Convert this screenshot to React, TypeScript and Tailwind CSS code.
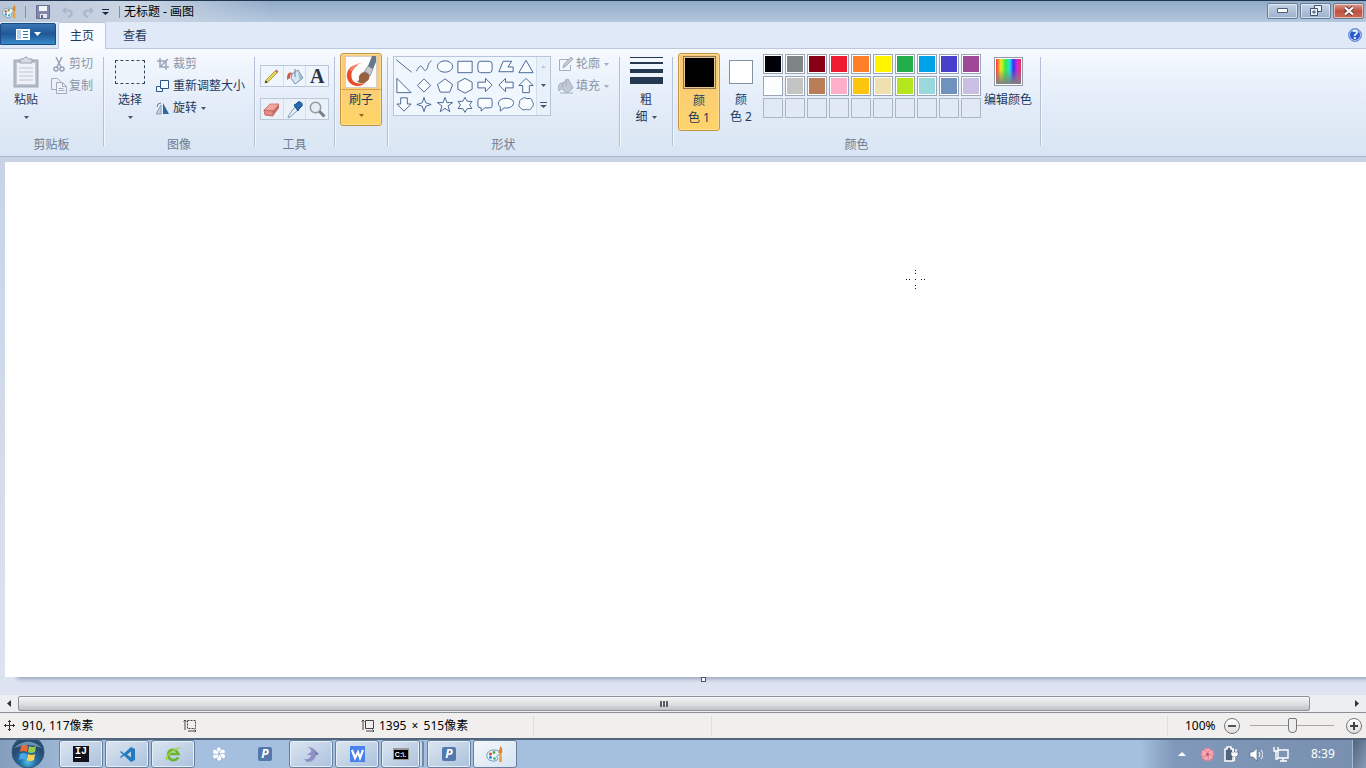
import type { ReactNode } from 'react';

const palette = [
  ['#000008', '#7f8586', '#880015', '#ed1c30', '#ff7f27', '#fff500', '#22ac4c', '#00a2e8', '#4640cc', '#a04898'],
  ['#fbfdff', '#c3c5c5', '#b97e57', '#ffaec9', '#ffc40e', '#efe0b0', '#b5e61d', '#99d9dc', '#7092be', '#c8bfe2']
];

const shapes = [
  ['直线', 'M2 3l16 13'],
  ['曲线', 'M2 15c3-6 5-7 7-3s4 2 5-2 2-5 4-6'],
  ['椭圆', 'M2 10a8 6 0 1 0 16 0a8 6 0 1 0-16 0z'],
  ['矩形', 'M2.5 4.5h15v12h-15z'],
  ['圆角矩形', 'M5.5 4.5h9q3 0 3 3v6q0 3-3 3h-9q-3 0-3-3v-6q0-3 3-3z'],
  ['多边形', 'M7 4.5h9l-4 6h5.5v5h-15z'],
  ['三角形', 'M10 3.5l7.500 13h-15z'],
  ['直角三角形', 'M2.5 2.5v15h15z'],
  ['菱形', 'M10 3l7 7-7 7-7-7z'],
  ['五边形', 'M10 3l8 6-3 8h-10l-3-8z'],
  ['六边形', 'M10 2.5l7.5 4v7.500l-7.5 4-7.5-4v-7.500z'],
  ['右箭头', 'M2.500 6.500h8v-4l7 7-7 7v-4h-8z'],
  ['左箭头', 'M17.500 6.500h-8v-4l-7 7 7 7v-4h8z'],
  ['上箭头', 'M10 2.500l7.500 7.500h-4v7.500h-7v-7.500h-4z'],
  ['下箭头', 'M6.500 3h7v6.500h4l-7.500 7.500-7.500-7.500h4z'],
  ['四角星形', 'M10 2.500l1.800 5.700 5.700 1.800-5.700 1.800-1.800 5.700-1.800-5.700-5.700-1.800 5.700-1.800z'],
  ['五角星形', 'M10 2.500l2 5.500h6l-4.800 3.500 1.800 6-5-3.500-5 3.500 1.800-6-4.800-3.500h6z'],
  ['六角星形', 'M10 2.500l2.300 4.200h5l-2.500 3.800 2.500 3.800h-5l-2.300 4-2.300-4h-5l2.500-3.800-2.500-3.800h5z'],
  ['圆角标注', 'M5 3.500h10q2.500 0 2.500 2.500v5q0 2.500-2.500 2.500h-5.500l-3.500 3.500v-3.500h-1q-2.500 0-2.500-2.500v-5q0-2.500 2.500-2.500z'],
  ['椭圆标注', 'M4 12.500c-4-3-2-9 6-9s10 5 6 8.500c-3 2-6 2-8 1.500l-4 3.500z'],
  ['云形标注', 'M6 4c2-2 4-1 5 0 3-1 6 0 5.500 3 2 2 1.500 5-.5 6-1 3-4 3-5.500 2-2 1-5 1-5.500-1-3-1-3-4-1.500-5.500-1-2 .5-4 2.500-4.500z']
];

function Arrow({ className = 'text-[#46566b]' }: { className?: string }) {
  return (
    <svg className={`shrink-0 ${className}`} width="5" height="3" viewBox="0 0 5 3" fill="currentColor">
      <path d="M0 0h5L2.500 3z" />
    </svg>
  );
}

function Group({ label, width, children }: { label: string; width: string; children: ReactNode }) {
  return (
    <section className={`flex shrink-0 flex-col ${width}`} aria-label={label || undefined}>
      <div className="flex flex-1">
        <div className="flex min-w-0 flex-1 flex-col">
          <div className="flex h-[84px] items-start">{children}</div>
          <div className="h-4 text-center leading-4 text-[#6e7c92]">{label}</div>
        </div>
        <div className="mt-1 mb-[10px] w-px bg-[#b4c1d4] shadow-[1px_0_0_#f3f7fc]" />
      </div>
    </section>
  );
}

function RowButton({ icon, text, arrow, muted }: { icon: ReactNode; text: string; arrow?: boolean; muted?: boolean }) {
  return (
    <button className={`flex h-[22px] items-center gap-1 whitespace-nowrap ${muted ? 'text-[#8b96a6]' : 'text-[#1e395b]'}`}>
      <span className="flex w-[13px] justify-center">{icon}</span>
      {text}
      {arrow && <Arrow className={muted ? 'text-[#a3adbb]' : 'text-[#46566b]'} />}
    </button>
  );
}

function PaintIcon({ size }: { size: number }) {
  return (
    <svg width={size} height={size} viewBox="0 0 18 18">
      <path d="M8 5c-5 0-8 3-7 7s7 5 10 3c2-2-1-2 0-4s4-1 3-3-3-3-6-3z" fill="#e8f4fb" stroke="#7196b5" />
      <circle cx="4.500" cy="9" r="1.500" fill="#d54a3a" />
      <circle cx="8" cy="7.500" r="1.400" fill="#58a83c" />
      <circle cx="4.500" cy="12.500" r="1.400" fill="#3187d8" />
      <circle cx="8.500" cy="13.500" r="1.300" fill="#3aae73" />
      <path d="M13 17l.5-9h2l.5 9z" fill="#e6a23f" />
      <path d="M12.500 8c0-3 1-3 2-7 2 2 2 4 1.500 7z" fill="#dd872b" />
    </svg>
  );
}

function TitleBar() {
  const windowButton =
    'flex h-4 w-[31px] items-center justify-center rounded-[2px] border border-[#687c96] shadow-[inset_0_0_0_1px_#ffffff88]';
  return (
    <header className="flex h-[22px] shrink-0 items-center border-t border-[#21354f] bg-linear-to-b from-[#91abc8] to-[#b4c8df] pr-[2px]">
      <div className="flex h-full w-[270px] items-center bg-linear-to-r from-[#b9c6d8] via-[#cbd6e4] to-transparent">
        <span className="flex w-[25px] pl-[2px]"><PaintIcon size={15} /></span>
        <span className="h-3 w-px bg-[#8190a5]" />
        <button aria-label="保存" className="ml-[10px]">
          <svg width="14" height="14" viewBox="0 0 14 14">
            <path d="M.5.5h13v13h-13z" fill="#8587ac" stroke="#686b92" />
            <path d="M3 1h8v5H3z" fill="#f3f5fa" />
            <path d="M4 9h7v4H4z" fill="#e7e9f0" />
            <path d="M5 10h2v3H5z" fill="#5e6389" />
          </svg>
        </button>
        <button aria-label="撤消" disabled className="ml-3">
          <svg width="12" height="12" viewBox="0 0 12 12" fill="none" stroke="#a9b7ca" strokeWidth="2"><path d="M4 2L1.500 4.500 4 7M2 4.500h4c5 0 5 5 0 6.500" /></svg>
        </button>
        <button aria-label="重做" disabled className="ml-2">
          <svg width="12" height="12" viewBox="0 0 12 12" fill="none" stroke="#a9b7ca" strokeWidth="2"><path d="M8 2l2.500 2.500L8 7M10 4.500H6c-5 0-5 5 0 6.500" /></svg>
        </button>
        <button aria-label="自定义快速访问工具栏" className="ml-2">
          <svg width="7" height="6" viewBox="0 0 7 6" fill="#18253b"><path d="M0 0h7v1H0zM0 3h7L3.500 6z" /></svg>
        </button>
        <span className="ml-[10px] h-3 w-px bg-[#8190a5]" />
        <h1 className="ml-1 text-black">无标题 - 画图</h1>
      </div>
      <div className="ml-auto flex gap-[2px] pb-[2px]">
        <button aria-label="最小化" className={`${windowButton} bg-linear-to-b from-[#c4d3e5] to-[#9bb1cc]`}>
          <svg width="11" height="5" viewBox="0 0 11 5"><path d="M.5.5h10v4H.5z" fill="#fff" stroke="#4c5e78" /></svg>
        </button>
        <button aria-label="还原" className={`${windowButton} bg-linear-to-b from-[#c4d3e5] to-[#9bb1cc]`}>
          <svg width="12" height="11" viewBox="0 0 12 11" fill="#edf3fa" stroke="#41536e"><path d="M4.500.500h7v6h-7z" /><path d="M.5 3.500h7v7h-7z" /><path d="M3 6h2v2H3z" /></svg>
        </button>
        <button aria-label="关闭" className={`${windowButton} bg-linear-to-b from-[#d9a093] via-[#c0503f] to-[#cc6c58]`}>
          <svg width="12" height="10" viewBox="0 0 12 10"><path d="M2 1.500l8 7M10 1.500l-8 7" stroke="#653b3b" strokeWidth="4" /><path d="M2 1.500l8 7M10 1.500l-8 7" stroke="#fff" strokeWidth="2.200" /></svg>
        </button>
      </div>
    </header>
  );
}

function Tabs() {
  return (
    <nav className="flex h-[27px] shrink-0 items-end border-b border-[#bbc8dc] bg-[#dfe9f7]">
      <button aria-label="文件" className="mb-[3px] flex h-[22px] w-14 items-center justify-center gap-1 rounded-t-[2px] border border-[#1c4a84] bg-linear-to-b from-[#3b75b5] via-[#205898] to-[#3a8bc9]">
        <svg width="14" height="11" viewBox="0 0 14 11">
          <path d="M0 0h14v11H0z" fill="#fff" />
          <path d="M1 1h4v9H1z" fill="#b9d2ee" />
          <path d="M7 2.500h5M7 5.500h5M7 8.500h5" stroke="#3970ad" />
        </svg>
        <svg width="7" height="4" viewBox="0 0 7 4" fill="#fff"><path d="M0 0h7L3.500 4z" /></svg>
      </button>
      <button className="-mb-px ml-[2px] h-[27px] w-12 rounded-t-[2px] border border-b-0 border-[#bbc8dc] bg-[#f8fbff] text-[#1e395b]">主页</button>
      <button className="ml-[5px] h-[25px] w-12 text-[#1e395b]">查看</button>
      <button aria-label="帮助" className="mr-1 mb-[6px] ml-auto flex size-[14px] items-center justify-center rounded-full border border-[#7893dc] bg-[#2859cf] text-xs font-bold text-white shadow-[inset_0_0_0_1px_#b5c7f8]">?</button>
    </nav>
  );
}

function Tools() {
  const cell = 'flex h-5 flex-1 items-center justify-center';
  return (
    <div className="ml-[5px] flex flex-col gap-[11px] pt-3">
      <div className="flex w-[69px] divide-x divide-[#d3deeb] border border-[#bac8da] bg-[#eff5fc]">
        <button aria-label="铅笔" className={cell}>
          <svg width="17" height="17" viewBox="0 0 17 17"><path d="M2 15l1-3L12.500 2.500l2 2L5 14z" fill="#e8d54d" stroke="#98944f" strokeWidth=".8" /><path d="M2 15l.700-2.500 1.800 1.800z" fill="#222" /><path d="M12 3l1.500-1.500 2 2L14 5z" fill="#bd7661" /></svg>
        </button>
        <button aria-label="用颜色填充" className={cell}>
          <svg width="18" height="17" viewBox="0 0 18 17"><path d="M6 6l6-4 5 8-8 6-4-6z" fill="#d7e7f3" stroke="#7993ac" /><path d="M9 1v8" stroke="#738196" /><path d="M7 5C2 3 1 6 1 12l3-2c0-3 1-4 3-5z" fill="#d25b50" /><path d="M12 3l4.500 7-3 2z" fill="#9cbbd0" /></svg>
        </button>
        <button aria-label="文本" className={`${cell} font-['Liberation_Serif',serif] text-xl font-bold text-[#263544]`}>A</button>
      </div>
      <div className="flex w-[69px] divide-x divide-[#d3deeb] border border-[#bac8da] bg-[#eaf1f9]">
        <button aria-label="橡皮擦" className={cell}>
          <svg width="17" height="15" viewBox="0 0 17 15"><path d="M1 8l6-6h9l-6 7z" fill="#f2a6a0" stroke="#ce817d" /><path d="M1 8l9 1v5l-8-1z" fill="#e68883" stroke="#be6a68" /><path d="M10 9l6-7v4l-6 8z" fill="#ca6865" /></svg>
        </button>
        <button aria-label="颜色选取器" className={cell}>
          <svg width="17" height="17" viewBox="0 0 17 17"><path d="M9 6l3 3-8 7-2 .500.500-2z" fill="#e7f2fa" stroke="#7b94a8" /><path d="M8 4l2-1 2-2c2-1 5 1 4 4l-3 3-1 2z" fill="#2868ae" stroke="#1c4d87" /></svg>
        </button>
        <button aria-label="放大镜" className={cell}>
          <svg width="17" height="17" viewBox="0 0 17 17"><path d="M10 10l5.500 5.500" stroke="#777d86" strokeWidth="3" /><circle cx="6.500" cy="6.500" r="5.200" fill="#e6eef5" stroke="#9299a2" strokeWidth="1.500" /></svg>
        </button>
      </div>
    </div>
  );
}

function Ribbon() {
  return (
    <div className="flex h-[108px] shrink-0 border-b border-[#a7b7cc] bg-linear-to-b from-[#f6faff] via-[#e3ecf8] to-[#d9e5f3] pt-1">
      <Group label="剪贴板" width="w-[104px]">
        <button className="ml-2 flex w-9 flex-col items-center pt-[3px] text-[#1e395b]">
          <svg width="26" height="32" viewBox="0 0 26 32">
            <path d="M1.500 4.500h23v26h-23z" fill="#c3c9d3" stroke="#a7afbc" strokeWidth="2" />
            <path d="M4 7h18v21H4z" fill="#eff2f7" />
            <path d="M6 12h14M6 16h14M6 20h14M6 24h14" stroke="#bdc5d2" />
            <path d="M7 3h3q3-4 6 0h3v4H7z" fill="#d6dae2" stroke="#9ba4b3" />
          </svg>
          <span className="mt-1 leading-4">粘贴</span>
          <span className="mt-2"><Arrow /></span>
        </button>
        <div className="ml-2 flex flex-col">
          <RowButton muted text="剪切" icon={<svg width="12" height="15" viewBox="0 0 12 15" fill="none" stroke="#98a3b4" strokeWidth="1.500"><path d="M3 0l5 10M9 0L4 10" /><circle cx="3" cy="12" r="2" /><circle cx="9" cy="12" r="2" /></svg>} />
          <RowButton muted text="复制" icon={<svg className="shrink-0" width="16" height="16" viewBox="0 0 16 16" fill="#eef2f8" stroke="#a3adbc"><path d="M.500.500h6l3 3v8h-9z" /><path d="M5.500 4.500h6l4 4v7h-10zM11.500 4.500v4h4M7.500 10.500h5M7.500 12.500h6" /></svg>} />
        </div>
      </Group>
      <Group label="图像" width="w-[151px]">
        <button className="ml-2 flex w-9 flex-col items-center pt-[7px] text-[#1e395b]">
          <span className="h-6 w-[30px] border border-dashed border-[#33485f] bg-[#edf3fa]" />
          <span className="mt-2 leading-4">选择</span>
          <span className="mt-2"><Arrow /></span>
        </button>
        <div className="ml-2 flex flex-col">
          <RowButton muted text="裁剪" icon={<svg width="12" height="12" viewBox="0 0 12 12" fill="none" stroke="#9aa5b5" strokeWidth="1.500"><path d="M3 0v9h9M0 3h9v9M4 8l7-7" /></svg>} />
          <RowButton text="重新调整大小" icon={<svg width="13" height="12" viewBox="0 0 13 12" fill="#f4f9ff" stroke="#2e5685"><path d="M.500 6.500h6v5h-6z" /><path d="M4.500.500h8v8h-8z" /></svg>} />
          <RowButton arrow text="旋转" icon={<svg width="13" height="13" viewBox="0 0 13 13"><path d="M5 3v9H0z" fill="#c4d1df" stroke="#8ca0b6" /><path d="M7 1v11h6z" fill="#2d689e" /><path d="M1 5q0-4 4-4" fill="none" stroke="#6280a2" /></svg>} />
        </div>
      </Group>
      <Group label="工具" width="w-20"><Tools /></Group>
      <Group label="" width="w-[53px]">
        <button className="ml-[5px] flex h-[73px] w-[42px] flex-col items-center rounded-[3px] border border-[#c69440] bg-linear-to-b from-[#f5c982] to-[#ffd566] pt-[2px] text-[#1e395b] shadow-[inset_0_0_0_1px_#ffdf92]">
          <svg width="32" height="32" viewBox="0 0 32 32">
            <path d="M.5.5h31v31H.5z" fill="#fdfcfa" stroke="#d8cfc4" />
            <path d="M13 9C3 9-1 19 4 26c4 5 12 5 16 1-5 1-11 1-13-4-2-6 1-11 6-14z" fill="#ea4a28" />
            <path d="M5 14c3-5 7-7 12-7-5 1-9 4-11 9z" fill="#f59a80" />
            <path d="M14 24c-1-5 3-9 8-8 4 2 3 8-1 10-3 2-6 1-9 0z" fill="#96633e" />
            <path d="M19 16l4-6 5 3-3 7c-1-2-3-4-6-4z" fill="#c4c7cc" stroke="#888e96" strokeWidth=".8" />
            <path d="M23 10l4-10h4v6l-3 7z" fill="#65778b" />
          </svg>
          <span className="mt-px w-full border-t border-[#d5a04c] pt-[2px] leading-4">刷子</span>
          <span className="mt-[6px]"><Arrow className="text-[#a15f27]" /></span>
        </button>
      </Group>
      <Group label="形状" width="w-[232px]">
        <div className="mt-[3px] ml-[5px] flex h-[60px] w-[158px] border border-[#b7c5d8] bg-[#f0f6fd]">
          <div className="grid flex-1 grid-cols-7 content-start">
            {shapes.map(([name, d]) => (
              <button key={name} aria-label={name} className="flex h-[19px] items-center justify-center">
                <svg width="20" height="19" viewBox="0 0 20 20" fill="#f9fcff" stroke="#446390"><path d={d} fill={name === '曲线' ? 'none' : undefined} /></svg>
              </button>
            ))}
          </div>
          <div className="flex w-[14px] flex-col border-l border-[#d3deeb] bg-[#e8f0f9]">
            <button aria-label="向上滚动" className="flex flex-1 rotate-180 items-center justify-center"><Arrow className="text-[#b8c4d2]" /></button>
            <button aria-label="向下滚动" className="flex flex-1 items-center justify-center"><Arrow /></button>
            <button aria-label="更多形状" className="flex flex-1 items-center justify-center"><svg width="7" height="6" viewBox="0 0 7 6" fill="#46566b"><path d="M0 0h7v1H0zM0 3h7L3.500 6z" /></svg></button>
          </div>
        </div>
        <div className="ml-2 flex flex-col">
          <RowButton muted arrow text="轮廓" icon={<svg className="shrink-0" width="16" height="16" viewBox="0 0 16 16" fill="none" stroke="#a4aebc"><path d="M11 3.500H1.500v11h11V9" /><path d="M5 12l1-4 7-7 2 2-7 7z" fill="#c4cbd5" /></svg>} />
          <RowButton muted arrow text="填充" icon={<svg className="shrink-0" width="16" height="16" viewBox="0 0 16 16" fill="#c2cad5" stroke="#a0abb9"><path d="M5 5l5-4 5 9-6 5-5-4zM8 1v7M5 5C0 5 0 9 1 13l2-2M2 15h13" /></svg>} />
        </div>
      </Group>
      <Group label="" width="w-[53px]">
        <button className="ml-[5px] flex w-[42px] flex-col items-center pt-1 text-[#1e395b]">
          <svg width="33" height="27" viewBox="0 0 33 27" fill="#24394f"><path d="M0 0h33v1H0zM0 5h33v2H0zM0 12h33v4H0zM0 20h33v7H0z" /></svg>
          <span className="mt-2 leading-4">粗</span>
          <span className="flex items-center gap-1 leading-[18px]">细 <Arrow /></span>
        </button>
      </Group>
      <Group label="颜色" width="w-[368px]">
        <button className="ml-[5px] flex h-[78px] w-[42px] flex-col items-center rounded-[3px] border border-[#c69440] bg-linear-to-b from-[#f6c77c] to-[#ffd46a] pt-[2px] text-[#1e395b] shadow-[inset_0_0_0_1px_#ffdf92]">
          <span className="size-[33px] border border-[#8c7550] bg-black shadow-[inset_0_0_0_1px_#e9c78d]" />
          <span className="mt-1 leading-4">颜</span>
          <span className="leading-[18px]">色 1</span>
        </button>
        <button className="flex w-[42px] flex-col items-center pt-[7px] text-[#1e395b]">
          <span className="size-6 border border-[#8292a7] bg-white" />
          <span className="mt-2 leading-4">颜</span>
          <span className="leading-[18px]">色 2</span>
        </button>
        <div className="mt-px ml-px grid grid-cols-10 gap-[2px]">
          {palette.flat().map((color) => (
            <button key={color} aria-label={`颜色 ${color}`} className="size-5 border border-[#9ba6b5] bg-white p-px">
              <span className="block size-full" style={{ backgroundColor: color }} />
            </button>
          ))}
          {Array.from({ length: 10 }, (_, i) => (
            <button key={i} aria-label={`自定义颜色 ${i + 1}`} className="size-5 border border-[#aab5c5] bg-[#e1e9f4]" />
          ))}
        </div>
        <button className="ml-[2px] flex w-[50px] flex-col items-center pt-1 text-[#1e395b]">
          <span className="size-[29px] border border-[#909aa9] bg-white p-px">
            <span className="block size-full bg-[linear-gradient(to_bottom,transparent_40%,#808080),linear-gradient(to_right,#f33,#ee2_20%,#3e4_38%,#2de_55%,#33e_70%,#d2d_85%,#e34)]" />
          </span>
          <span className="mt-[6px] leading-4 whitespace-nowrap">编辑颜色</span>
        </button>
      </Group>
    </div>
  );
}

function Canvas() {
  return (
    <main className="min-h-0 flex-1 overflow-hidden bg-linear-to-b from-[#c8d3e4] to-[#dde3f1] pt-[5px] pb-[18px] pl-[5px]">
      <div className="relative h-full w-full bg-white shadow-[10px_4px_4px_-2px_#98a3bd]">
        <svg className="absolute top-[108px] left-[900px]" width="20" height="20" viewBox="0 0 20 20" fill="#111">
          <path d="M10 0h1v1h-1zM10 3h1v1h-1zM10 9h1v1h-1zM10 15h1v1h-1zM10 18h1v1h-1zM1 9h1v1H1zM4 9h1v1H4zM16 9h1v1h-1zM19 9h1v1h-1z" />
        </svg>
        <span className="absolute -bottom-[5px] left-[696px] size-[5px] border border-[#4a566b] bg-white" />
      </div>
    </main>
  );
}

function ScrollBar() {
  return (
    <div className="flex h-[17px] shrink-0 items-center bg-[#eceef1]">
      <button aria-label="向左滚动" className="flex h-full w-[18px] items-center justify-center"><svg width="4" height="7" viewBox="0 0 4 7" fill="#333"><path d="M4 0v7L0 3.500z" /></svg></button>
      <div className="flex-1">
        <div className="mr-[38px] flex h-[15px] items-center justify-center gap-px rounded-[2px] border border-[#8d949d] bg-linear-to-b from-[#f4f5f6] via-[#dfe1e3] to-[#bfc2c5]">
          <span className="h-[6px] w-[2px] bg-[#596068]" />
          <span className="h-[6px] w-[2px] bg-[#596068]" />
          <span className="h-[6px] w-[2px] bg-[#596068]" />
        </div>
      </div>
      <button aria-label="向右滚动" className="flex h-full w-[18px] items-center justify-center"><svg width="4" height="7" viewBox="0 0 4 7" fill="#333"><path d="M0 0v7l4-3.500z" /></svg></button>
    </div>
  );
}

function StatusBar() {
  const round = 'flex size-4 shrink-0 items-center justify-center rounded-full border border-[#777] bg-linear-to-b from-white to-[#dedede]';
  return (
    <footer className="flex h-[26px] shrink-0 items-center border-t border-[#8b9097] bg-[#f1efee] text-black">
      <div className="flex w-[178px] items-center gap-[7px] pl-1">
        <svg width="11" height="11" viewBox="0 0 11 11" fill="none" stroke="#333"><path d="M5.500 0v11M0 5.500h11M4 2l1.500-1.500L7 2M4 9l1.500 1.500L7 9M2 4L.5 5.500 2 7M9 4l1.500 1.500L9 7" /></svg>
        910, 117像素
      </div>
      <div className="w-[178px] pl-[5px]">
        <svg width="14" height="13" viewBox="0 0 14 13" fill="none" stroke="#444"><path d="M2 1v10M.500 2.500L2 1l1.500 1.500M5 12h8M11.500 10.500L13 12l-1.500 1" /><path d="M4.500 1.500h8v8h-8z" strokeDasharray="2 1" /></svg>
      </div>
      <div className="flex h-5 w-[178px] items-center gap-1 border-r border-[#dedee0] pl-[5px]">
        <svg width="14" height="13" viewBox="0 0 14 13" fill="none" stroke="#444"><path d="M2 1v10M.500 2.500L2 1l1.500 1.500M5 12h8M11.500 10.500L13 12l-1.500 1M4.500 1.500h8v8h-8z" /></svg>
        <span>1395 <span className="mx-[2px]">×</span> 515像素</span>
      </div>
      <div className="h-5 w-[178px] border-r border-[#dedee0]" />
      <div className="ml-auto flex h-5 w-[199px] items-center border-l border-[#dedee0] pr-1 pl-[17px]">
        <label htmlFor="zoom" className="w-[39px]">100%</label>
        <button aria-label="缩小" className={round}><span className="h-[2px] w-2 bg-[#555]" /></button>
        <input
          id="zoom"
          type="range"
          defaultValue={50}
          className="mx-[10px] h-4 w-[84px] appearance-none bg-[linear-gradient(#a7a7a7,#a7a7a7)] bg-[length:100%_1px] bg-center bg-no-repeat [&::-webkit-slider-thumb]:h-[15px] [&::-webkit-slider-thumb]:w-[9px] [&::-webkit-slider-thumb]:appearance-none [&::-webkit-slider-thumb]:rounded-t-[2px] [&::-webkit-slider-thumb]:rounded-b-[4px] [&::-webkit-slider-thumb]:border [&::-webkit-slider-thumb]:border-[#777] [&::-webkit-slider-thumb]:bg-[#ededed]"
        />
        <button aria-label="放大" className={`${round} ml-auto`}><svg width="8" height="8" viewBox="0 0 8 8" stroke="#444" strokeWidth="2"><path d="M4 0v8M0 4h8" /></svg></button>
      </div>
    </footer>
  );
}

function PIcon() {
  return (
    <span className="flex size-[14px] items-center justify-center rounded-[2px] bg-[#5278ae] font-['Open_Sans',sans-serif] text-xs font-bold text-white italic">P</span>
  );
}

const apps: { name: string; open: boolean; icon: ReactNode }[] = [
  {
    name: 'IntelliJ IDEA',
    open: true,
    icon: <span className="flex size-4 flex-col items-start bg-[#10121c] pl-[2px] font-['Liberation_Mono',monospace] text-[10px] leading-[11px] font-bold text-white">IJ<span className="h-px w-[6px] bg-white" /></span>
  },
  {
    name: 'Visual Studio Code',
    open: true,
    icon: <svg width="17" height="17" viewBox="0 0 17 17"><path d="M12 1l4 2v11l-4 2-7-6.500L2 12l-1-1 3-2.500L1 6l1-1 3 2.500zM12 5.500L8 8.500l4 3z" fill="#2479bf" fillRule="evenodd" /></svg>
  },
  {
    name: '浏览器',
    open: true,
    icon: <svg width="16" height="16" viewBox="0 0 18 18" fill="none" stroke="#69b532"><path d="M15 13c-3 4-9 4-11-1-3-8 8-11 11-3H4" strokeWidth="3" /><path d="M3 15c-3 1-1-5 5-9s8-4 9-3" stroke="#a3d43c" strokeWidth="1.500" /></svg>
  },
  {
    name: '图片',
    open: false,
    icon: (
      <svg width="16" height="16" viewBox="0 0 16 16" fill="#fff" stroke="#89a8ce" strokeWidth=".6">
        {[0, 60, 120, 180, 240, 300].map((angle) => <path key={angle} transform={`rotate(${angle} 8 8)`} d="M8 8C4 5 5 1 8 1s3 4 0 7z" />)}
      </svg>
    )
  },
  { name: 'P', open: false, icon: <PIcon /> },
  {
    name: 'Navicat',
    open: true,
    icon: <svg width="17" height="17" viewBox="0 0 17 17"><path d="M4 1c8 0 12 5 8 11-2 3-5 4-8 4l-3-3c4 1 7-1 7-4H4l4-3c1-2-1-4-4-5z" fill="#8e8fc9" /><path d="M12 5l4 3-3 1z" fill="#6572ae" /></svg>
  },
  {
    name: 'WPS 文字',
    open: true,
    icon: <svg width="17" height="17" viewBox="0 0 17 17"><path d="M1 0h15v16H1z" fill="#4a82ed" /><path d="M3 4l3 8 3-6 2 6 3-8" fill="none" stroke="#fff" strokeWidth="2.200" /></svg>
  },
  {
    name: '命令提示符',
    open: true,
    icon: <span className="flex h-3 w-4 items-center justify-center border border-t-2 border-[#999] bg-black font-['Liberation_Sans',sans-serif] text-[7px] font-bold text-white">C:\.</span>
  },
  { name: 'P 窗口', open: true, icon: <PIcon /> },
  { name: '画图', open: true, icon: <PaintIcon size={18} /> }
];

function Taskbar() {
  return (
    <nav className="flex h-[30px] shrink-0 items-center border-t-2 border-[#53657d] bg-linear-to-r from-[#859dbd] via-[#a5c0df] via-6% to-[#a5c0df]" aria-label="任务栏">
      <button aria-label="开始" className="flex w-[55px] justify-center">
        <svg width="34" height="28" viewBox="0 0 34 28">
          <defs><radialGradient id="orb" cx=".5" cy=".8"><stop stopColor="#55c4e8" /><stop offset=".5" stopColor="#246da3" /><stop offset="1" stopColor="#264c72" /></radialGradient></defs>
          <circle cx="17" cy="12" r="16" fill="url(#orb)" stroke="#345878" />
          <path d="M10 6q4-2 7 0l-1 6q-3-2-7 0z" fill="#ee6735" />
          <path d="M18 6q4 2 7 0l-1 6q-4 2-7 0z" fill="#99ca4b" />
          <path d="M9 14q4-2 7 0l-1 6q-3-2-7 0z" fill="#49a7e8" />
          <path d="M17 14q4 2 7 0l-1 6q-4 2-7 0z" fill="#ffd14c" />
          <path d="M3 8q14-13 28 0Q17 2 3 8z" fill="#bad6e8" opacity=".5" />
        </svg>
      </button>
      <div className="ml-1 flex gap-[2px]">
        {apps.map(({ name, open, icon }) => (
          <button
            key={name}
            aria-label={name}
            className={`flex h-7 items-center justify-center rounded-[3px] border ${name === '命令提示符' ? 'mr-[5px] w-[39px] shadow-[3px_0_0_-1px_#cbd9e9,5px_0_0_-1px_#7189a7]' : 'w-11'} ${name === '画图' ? 'border-[#677f9d] bg-linear-to-br from-[#f4f7fb] to-[#d5e3f2]' : open ? 'border-[#677f9d] bg-linear-to-br from-[#dce6f1] to-[#abc1dc] inset-ring inset-ring-[#e6eff8]' : 'border-transparent'}`}
          >
            {icon}
          </button>
        ))}
      </div>
      <div className="ml-auto flex h-full w-[226px] items-center justify-end bg-linear-to-r from-[#a5c0df] via-[#8098b9] via-15% to-[#788faf]">
        <button aria-label="显示隐藏的图标" className="mr-[14px]"><svg width="8" height="4" viewBox="0 0 8 4" fill="#fff"><path d="M0 4h8L4 0z" /></svg></button>
        <button aria-label="输入法" className="mr-2">
          <svg width="15" height="15" viewBox="0 0 16 16" fill="#f2a8b5" stroke="#df7487" strokeWidth=".7">
            {[0, 72, 144, 216, 288].map((angle) => <path key={angle} transform={`rotate(${angle} 8 8)`} d="M8 8C3 6 4 1 7 1l1 1 1-1c3 0 4 5-1 7z" />)}
            <circle cx="8" cy="8" r="1.500" fill="#c6475f" />
          </svg>
        </button>
        <button aria-label="电源" className="mr-[10px]"><svg width="16" height="16" viewBox="0 0 16 16"><path d="M2 3h2V1h4v2h2v12H2z" fill="#53657c" stroke="#fff" strokeWidth="1.500" /><path d="M8 6h7v3l-2 2h-3L8 9z" fill="#fff" stroke="#53657c" strokeWidth=".6" /><path d="M10 3v3M13 3v3M11.500 11v4" stroke="#fff" strokeWidth="1.300" /></svg></button>
        <button aria-label="音量" className="mr-[10px]"><svg width="14" height="15" viewBox="0 0 14 15"><path d="M1 5h3l4-4v13l-4-4H1z" fill="#fff" stroke="#4a607b" strokeWidth=".6" /><path d="M10 5q2 2.500 0 5M12 3q4 4.500 0 9" fill="none" stroke="#fff" /></svg></button>
        <button aria-label="网络" className="mr-[22px]"><svg width="16" height="16" viewBox="0 0 16 16" fill="none" stroke="#fff" strokeWidth="1.400"><path d="M5 4h10v8H5zM7 15h7M10 12v3M1 1v4h4V1M3 5v8h2" /></svg></button>
        <time className="mr-[15px] w-[26px] text-white">8:39</time>
        <button aria-label="显示桌面" className="h-full w-[14px] border-l border-[#aabbd0] bg-linear-to-br from-[#52657f] to-[#879bb6]" />
      </div>
    </nav>
  );
}

export default function App() {
  return (
    <div className="flex h-screen flex-col overflow-hidden font-['Noto_Sans','Noto_Sans_CJK_SC',sans-serif] text-xs leading-4">
      <TitleBar />
      <Tabs />
      <Ribbon />
      <Canvas />
      <ScrollBar />
      <StatusBar />
      <Taskbar />
    </div>
  );
}
